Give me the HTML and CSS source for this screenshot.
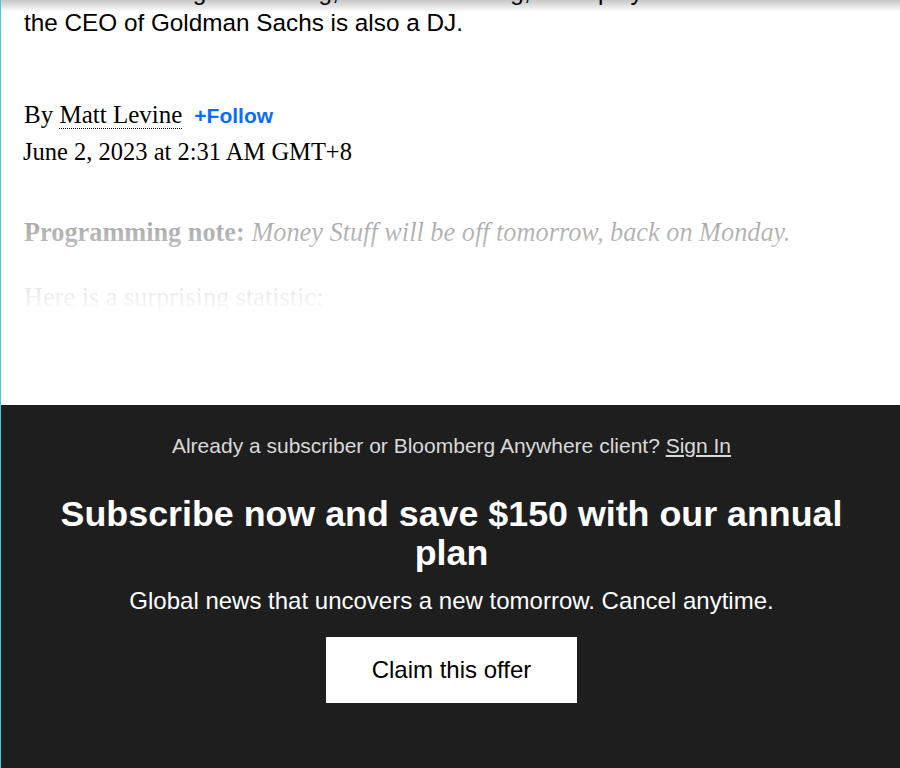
FILE: index.html
```html
<!DOCTYPE html>
<html lang="en">
<head>
<meta charset="utf-8">
<title>Money Stuff</title>
<link rel="stylesheet" href="styles.css">
</head>
<body>
<div class="frame">
  <div class="top-shadow"></div>
  <main class="article">
    <p class="dek">Also direct listing fundraising, DAO fundraising, unemployed Harvard MBAs and<br>the CEO of Goldman Sachs is also a DJ.</p>
    <div class="byline">
      <div class="author-row">
        <span class="by">By <a class="author" href="#">Matt Levine</a></span>
        <a class="follow" href="#">+Follow</a>
      </div>
      <div class="date">June 2, 2023 at 2:31 AM GMT+8</div>
    </div>
    <div class="body">
      <p class="para"><strong>Programming note:</strong> <em>Money Stuff will be off tomorrow, back on Monday.</em></p>
      <p class="para">Here is a surprising statistic:</p>
      <div class="fade"></div>
    </div>
  </main>
  <section class="paywall">
    <p class="signin">Already a subscriber or Bloomberg Anywhere client? <a href="#">Sign In</a></p>
    <h2 class="headline">Subscribe now and save $150 with our annual plan</h2>
    <p class="sub">Global news that uncovers a new tomorrow. Cancel anytime.</p>
    <a class="cta" href="#">Claim this offer</a>
  </section>
</div>
</body>
</html>
```
FILE: styles.css
```css
html, body {
  margin: 0;
  padding: 0;
  background: #fff;
}
body {
  height: 768px;
  overflow: hidden;
}
.frame {
  position: relative;
  height: 768px;
  border-left: 1px solid #4cc2ef;
  display: flex;
  flex-direction: column;
  overflow: hidden;
}
.top-shadow {
  position: absolute;
  top: 0;
  left: 0;
  right: 0;
  height: 12px;
  background: linear-gradient(to bottom, rgba(0,0,0,0.22), rgba(0,0,0,0));
  z-index: 2;
}
.article {
  flex: 1 1 auto;
  min-height: 0;
  overflow: hidden;
  padding: 0 20px 0 23px;
}
.dek {
  margin: -24px 0 0 0;
  font-family: "Liberation Sans", Arial, sans-serif;
  font-size: 24.3px;
  line-height: 31px;
  color: #000;
  white-space: nowrap;
}
.byline {
  margin-top: 62px;
  font-family: "Liberation Serif", "Times New Roman", serif;
  color: #000;
}
.author-row {
  display: flex;
  align-items: baseline;
  gap: 12px;
  line-height: 30px;
  font-size: 25px;
}
.author {
  color: #000;
  text-decoration: none;
  border-bottom: 1px dotted #000;
}
.follow {
  font-family: "Liberation Sans", Arial, sans-serif;
  font-size: 21px;
  font-weight: bold;
  color: #0a6cff;
  text-decoration: none;
}
.date {
  font-size: 24.5px;
  line-height: 30px;
  margin-top: 6px;
  margin-left: -1px;
}
.body {
  position: relative;
  margin-top: 50px;
  font-family: "Liberation Serif", "Times New Roman", serif;
  font-size: 26.3px;
  color: #000;
}
.para {
  margin: 0 0 33px 0;
  line-height: 32px;
}
.fade {
  position: absolute;
  top: -12px;
  left: -30px;
  right: -50px;
  height: 220px;
  background: linear-gradient(to bottom, rgba(255,255,255,0.6), rgba(255,255,255,1) 110px);
}
.paywall {
  height: 363px;
  flex: none;
  background: #1e1e1e;
  box-sizing: border-box;
  padding: 29px 29px 0 31px;
  display: flex;
  flex-direction: column;
  align-items: center;
  text-align: center;
  font-family: "Liberation Sans", Arial, sans-serif;
}
.signin {
  margin: 0;
  font-size: 21px;
  line-height: 24px;
  color: #d9d9d9;
}
.signin a {
  color: #d9d9d9;
  text-decoration: underline;
}
.headline {
  margin: 37px 0 0 0;
  font-size: 35.8px;
  line-height: 39px;
  font-weight: bold;
  color: #fff;
}
.sub {
  margin: 14px 0 0 0;
  font-size: 24px;
  line-height: 28px;
  color: #fff;
}
.cta {
  margin-top: 22px;
  width: 251px;
  height: 66px;
  background: #fff;
  color: #000;
  font-size: 24px;
  text-decoration: none;
  display: flex;
  align-items: center;
  justify-content: center;
}
```
